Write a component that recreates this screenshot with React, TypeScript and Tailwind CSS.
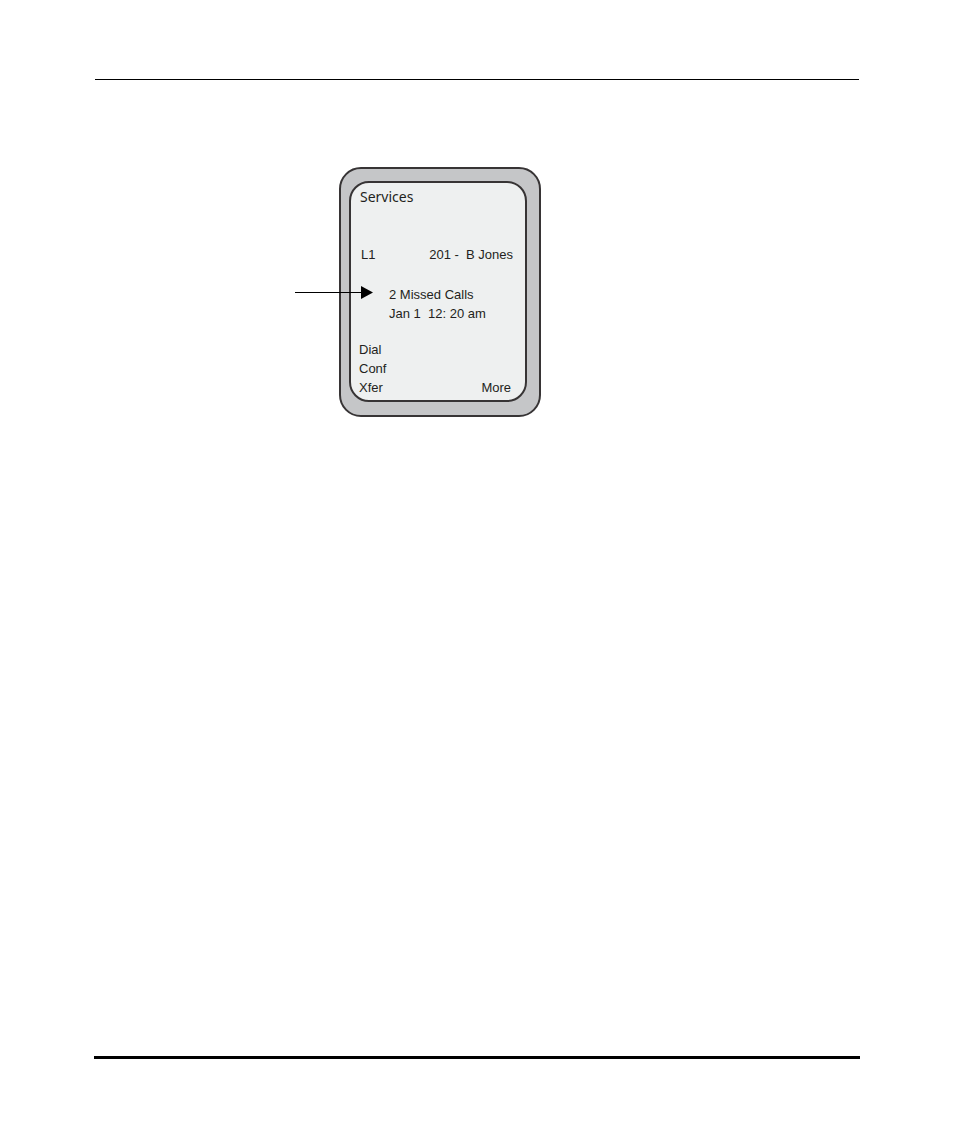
function Arrow() {
  return (
    <svg
      className="absolute top-[117px] right-[166px] h-[14px] w-[78px]"
      viewBox="0 0 78 14"
      role="img"
      aria-label="Pointer to missed calls"
    >
      <path d="M0 6.5H68" stroke="#000" strokeWidth="1" />
      <path d="M66 0L78 6.5L66 13Z" fill="#000" />
    </svg>
  );
}

const softKeys = ["Dial", "Conf", "Xfer"];

function PhoneScreen() {
  return (
    <section className="w-[178px] rounded-[20px] border-2 border-[#373435] bg-[#eef0f0] pt-1 pr-3 pb-[3px] pl-2 font-['Liberation_Sans',Arial,sans-serif] text-[13px] leading-[19px] text-[#231f20]">
      <h1 className="pl-px font-['Noto_Sans',sans-serif] text-[14px] leading-[19px]">Services</h1>
      <div className="mt-[39px] flex justify-between pl-[2px]">
        <span>L1</span>
        <span className="whitespace-pre">201 -  B Jones</span>
      </div>
      <div className="mt-[21px] pl-[30px] whitespace-pre">
        <p>2 Missed Calls</p>
        <p>Jan 1  12: 20 am</p>
      </div>
      <div className="mt-[17px] flex items-end justify-between pr-[2px]">
        <div className="flex flex-col items-start">
          {softKeys.map((key) => (
            <button key={key} type="button">
              {key}
            </button>
          ))}
        </div>
        <button type="button">More</button>
      </div>
    </section>
  );
}

export default function App() {
  return (
    <div className="flex min-h-screen flex-col bg-white px-[94px] pt-[79px] pb-[86px]">
      <hr className="mx-px border-t border-black" />
      <main className="mt-[87px] pl-[245px]">
        <figure className="relative w-fit rounded-[22px] border-2 border-[#373435] bg-[#c5c6c8] pt-3 pr-3 pb-[13px] pl-2">
          <PhoneScreen />
          <Arrow />
        </figure>
      </main>
      <hr className="mt-auto border-t-3 border-black" />
    </div>
  );
}
